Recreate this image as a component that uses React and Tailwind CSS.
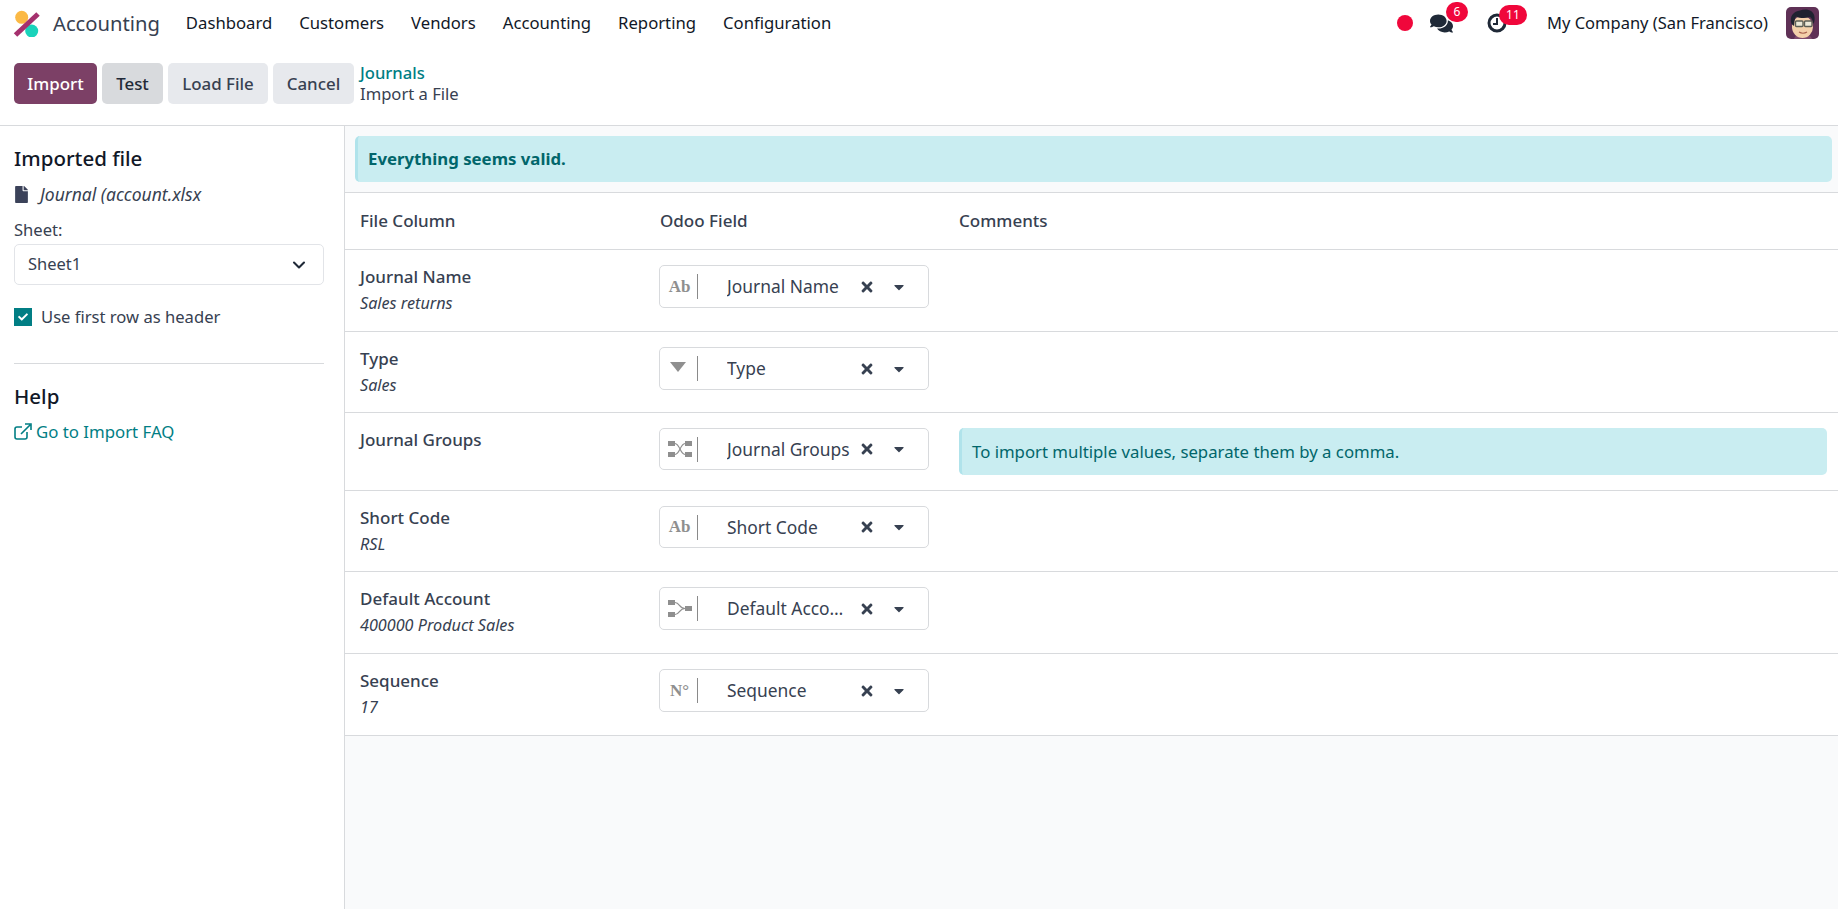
import { FaComments, FaFile, FaTimes, FaCaretDown, FaCheck } from 'react-icons/fa';
import { FiChevronDown } from 'react-icons/fi';

const navItems = ['Dashboard', 'Customers', 'Vendors', 'Accounting', 'Reporting', 'Configuration'];

function Logo() {
  return (
    <svg width="28" height="28" viewBox="0 0 28 28" className="shrink-0">
      <circle cx="8.7" cy="8.3" r="6.5" fill="#fbb945" />
      <circle cx="18.7" cy="22" r="6.5" fill="#1ad3bb" />
      <path d="M25 5 L2.5 26" stroke="#a5316e" strokeWidth="5" />
    </svg>
  );
}

function Avatar() {
  return (
    <svg width="33" height="32" viewBox="0 0 33 32" className="rounded-[5px] shrink-0">
      <rect width="33" height="32" fill="#5f3156" />
      <path d="M8 32 C9 28 13 27 16 27 C20 27 25 28 26 32 Z" fill="#7d4a6c" />
      <ellipse cx="16.5" cy="20" rx="10.5" ry="11" fill="#f3d0aa" />
      <path d="M5.5 17 C3 9 8 4 14 3.5 C20 1 28 3 28.5 10 C29 13 28 16 27.5 17 C26.5 13 26 11 24 10 C19 12 13 11 10 9.5 C8.5 12 8.5 15 8 19 Z" fill="#1f2230" />
      <rect x="9.5" y="14" width="7.5" height="5.5" rx="1" fill="#ece9d8" stroke="#5c5f56" strokeWidth="1.4" />
      <rect x="18.5" y="14" width="7.5" height="5.5" rx="1" fill="#ece9d8" stroke="#5c5f56" strokeWidth="1.4" />
      <path d="M13 25 Q17 27.5 21 25" stroke="#a8624f" strokeWidth="1.2" fill="none" />
    </svg>
  );
}

function ShuffleIcon() {
  return (
    <svg width="24" height="18" viewBox="0 0 24 18" fill="#8f8f8f">
      <rect x="0" y="1" width="7" height="5" />
      <rect x="0" y="12" width="7" height="5" />
      <rect x="17" y="1" width="7" height="5" />
      <rect x="17" y="12" width="7" height="5" />
      <path d="M7 3.5 C12 4 12 14 17 14.5 M7 14.5 C12 14 12 4 17 3.5" stroke="#8f8f8f" strokeWidth="1.2" fill="none" />
    </svg>
  );
}

function MergeIcon() {
  return (
    <svg width="24" height="18" viewBox="0 0 24 18" fill="#8f8f8f">
      <rect x="0" y="0" width="7" height="5" />
      <rect x="0" y="12" width="7" height="5" />
      <rect x="17" y="6" width="7" height="5" />
      <path d="M7 2.5 C12 2.5 11 8.5 17 8.5 M7 14.5 C12 14.5 11 8.5 17 8.5" stroke="#8f8f8f" strokeWidth="1.2" fill="none" />
    </svg>
  );
}

function FieldIcon({ type }) {
  if (type === 'text') return <span className="font-['Liberation_Serif',serif] font-bold text-[17px] text-[#8f8f8f]">Ab</span>;
  if (type === 'number') return <span className="font-['Liberation_Serif',serif] font-bold text-[17px] text-[#8f8f8f]">N°</span>;
  if (type === 'select') {
    return (
      <svg width="16" height="10" viewBox="0 0 16 10" fill="#8f8f8f" className="mb-1 -ml-[3px]">
        <path d="M0 0 H16 L8 10 Z" />
      </svg>
    );
  }
  if (type === 'many') return <ShuffleIcon />;
  return <MergeIcon />;
}

const rows = [
  { label: 'Journal Name', preview: 'Sales returns', field: 'Journal Name', icon: 'text', h: 'h-[82px]', box: 'h-[43px]' },
  { label: 'Type', preview: 'Sales', field: 'Type', icon: 'select', h: 'h-[81px]', box: 'h-[43px]' },
  {
    label: 'Journal Groups',
    field: 'Journal Groups',
    icon: 'many',
    h: 'h-[78px]',
    box: 'h-[42px]',
    comment: 'To import multiple values, separate them by a comma.',
  },
  { label: 'Short Code', preview: 'RSL', field: 'Short Code', icon: 'text', h: 'h-[81px]', box: 'h-[42px]' },
  { label: 'Default Account', preview: '400000 Product Sales', field: 'Default Account', icon: 'merge', h: 'h-[82px]', box: 'h-[43px]' },
  { label: 'Sequence', preview: '17', field: 'Sequence', icon: 'number', h: 'h-[82px]', box: 'h-[43px]' },
];

function FieldSelect({ row }) {
  return (
    <div className={`${row.box} w-[270px] flex items-center border border-[#d8dadd] rounded-[5px] bg-white`}>
      <div className="w-[36px] flex justify-center pl-[3px] shrink-0">
        <FieldIcon type={row.icon} />
      </div>
      <div className="w-px h-[25px] bg-[#8a8a8a] ml-[1px] shrink-0" />
      <div className="ml-[29px] w-[125px] truncate text-[17.4px] text-[#374151]">{row.field}</div>
      <FaTimes className="ml-[7px] text-[#374151] shrink-0" size={16} />
      <FaCaretDown className="ml-[16px] text-[#374151] shrink-0" size={16} />
    </div>
  );
}

export default function App() {
  return (
    <div className="h-[909px] w-[1838px] flex flex-col overflow-hidden bg-white font-['Noto_Sans',sans-serif] text-[#374151]">
      {/* top nav */}
      <div className="h-[46px] flex items-center pl-[13px] pr-[19px] shrink-0">
        <Logo />
        <span className="ml-[12px] text-[20.2px] text-[#374151]">Accounting</span>
        <nav className="ml-[26px] flex gap-[27px] text-[16.7px] text-[#111827]">
          {navItems.map((item) => (
            <span key={item}>{item}</span>
          ))}
        </nav>
        <div className="ml-auto flex items-center">
          <div className="w-4 h-4 rounded-full bg-[#f0073b]" />
          <div className="relative ml-[17px]">
            <FaComments size={23} className="text-[#1f2937]" />
            <span className="absolute -top-[10px] left-[16px] w-[22px] h-[20px] rounded-full bg-[#f0073b] text-white text-[12px] flex items-center justify-center">6</span>
          </div>
          <div className="relative ml-[34px]">
            <svg width="20" height="20" viewBox="0 0 20 20" fill="none" stroke="#1f2937" strokeWidth="3">
              <circle cx="10" cy="10" r="8" />
              <path d="M10 5 V11 H6" strokeWidth="2" />
            </svg>
            <span className="absolute -top-[8px] left-[12px] w-[28px] h-[20px] rounded-full bg-[#f0073b] text-white text-[12px] flex items-center justify-center">11</span>
          </div>
          <span className="ml-[40px] text-[16.5px] text-[#111827]">My Company (San Francisco)</span>
          <div className="ml-[18px]">
            <Avatar />
          </div>
        </div>
      </div>

      {/* control panel */}
      <div className="h-[80px] flex items-start pt-[17px] pl-[14px] border-b border-[#d8dadd] shrink-0">
        <div className="flex gap-[5px] text-[16.9px] font-medium">
          <button className="h-[41px] w-[83px] rounded-[5px] bg-[#7c4066] text-white">Import</button>
          <button className="h-[41px] w-[61px] rounded-[5px] bg-[#d8dadd] text-[#1f2937]">Test</button>
          <button className="h-[41px] w-[100px] rounded-[5px] bg-[#e7e9ed] text-[#374151]">Load File</button>
          <button className="h-[41px] w-[81px] rounded-[5px] bg-[#e7e9ed] text-[#374151]">Cancel</button>
        </div>
        <div className="ml-[6px] -mt-[1px] text-[16.6px] leading-[21px]">
          <div className="text-[#017e84] font-medium">Journals</div>
          <div>Import a File</div>
        </div>
      </div>

      <div className="flex-1 flex min-h-0">
        {/* sidebar */}
        <aside className="w-[345px] shrink-0 border-r border-[#d8dadd] pl-[14px] pr-[20px] pt-[17px]">
          <h2 className="text-[20.5px] leading-[30px] font-medium text-[#111827]">Imported file</h2>
          <div className="mt-[9px] flex items-center">
            <FaFile size={17} className="text-[#3b4259] w-[15px]" />
            <span className="ml-[11px] text-[17.5px] italic leading-[24px]">Journal (account.xlsx</span>
          </div>
          <div className="mt-[13px] text-[16.6px] leading-[22px]">Sheet:</div>
          <div className="mt-[3px] h-[41px] flex items-center justify-between border border-[#e2e4e8] rounded-[5px] pl-[13px] pr-[14px] text-[16.5px]">
            <span>Sheet1</span>
            <FiChevronDown size={20} className="text-[#1f2937]" strokeWidth={2.5} />
          </div>
          <div className="mt-[20px] flex items-center">
            <div className="w-[18px] h-[18px] bg-[#017e84] flex items-center justify-center">
              <FaCheck size={10} className="text-white" />
            </div>
            <span className="ml-[9px] text-[16.6px]">Use first row as header</span>
          </div>
          <div className="mt-[33px] border-t border-[#d8dadd]" />
          <h2 className="mt-[17px] text-[20.5px] leading-[30px] font-medium text-[#111827]">Help</h2>
          <div className="mt-[8px] flex items-center text-[#017e84] text-[16.8px]">
            <svg width="18" height="17" viewBox="0 0 18 17" fill="none" stroke="#017e84" strokeWidth="1.6">
              <path d="M13 9 V14 A2 2 0 0 1 11 16 H3 A2 2 0 0 1 1 14 V6 A2 2 0 0 1 3 4 H8" />
              <path d="M7 11 L16 2 M11 1 H17 V7" />
            </svg>
            <span className="ml-[4px]">Go to Import FAQ</span>
          </div>
        </aside>

        {/* main */}
        <main className="flex-1 bg-[#f9fafb] min-w-0">
          <div className="h-[67px] pt-[10px] pl-[10px] pr-[6px] border-b border-[#d8dadd]">
            <div className="h-[46px] flex items-center pl-[10px] rounded-[5px] bg-[#c9edf1] border-l-[3px] border-[#b0e3eb] text-[#01666b] font-bold text-[16.8px]">
              Everything seems valid.
            </div>
          </div>
          <div className="grid grid-cols-[300px_299px_1fr] h-[57px] items-center bg-white border-b border-[#d8dadd] pl-[15px] font-medium text-[17px]">
            <div>File Column</div>
            <div>Odoo Field</div>
            <div>Comments</div>
          </div>
          {rows.map((row) => (
            <div key={row.label} className={`${row.h} grid grid-cols-[299px_299px_1fr] bg-white border-b border-[#d8dadd] pl-[15px]`}>
              <div className="pt-[15px]">
                <div className="text-[17px] font-medium leading-[24px]">{row.label}</div>
                {row.preview && <div className="mt-[3px] text-[16.2px] italic leading-[22px]">{row.preview}</div>}
              </div>
              <div className="pt-[15px]">
                <FieldSelect row={row} />
              </div>
              <div className="pt-[15px] pl-[1px] pr-[11px]">
                {row.comment && (
                  <div className="h-[47px] flex items-center pl-[10px] rounded-[5px] bg-[#c9edf1] border-l-[3px] border-[#b0e3eb] text-[#01666b] text-[16.75px]">
                    {row.comment}
                  </div>
                )}
              </div>
            </div>
          ))}
        </main>
      </div>
    </div>
  );
}
